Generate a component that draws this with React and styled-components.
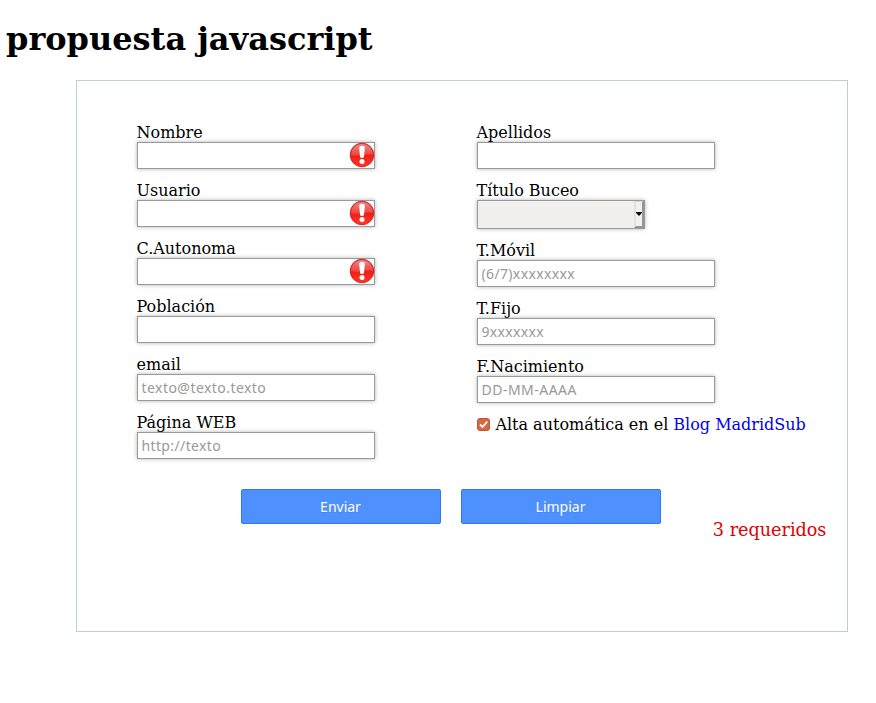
import React from "react";
import styled, { createGlobalStyle } from "styled-components";

const GlobalStyle = createGlobalStyle`
  * { box-sizing: border-box; }
  body {
    margin: 0;
    background: #fff;
    color: #000;
    font: 16px/19px "DejaVu Serif", serif;
  }
`;

const Page = styled.main`
  padding: 20px 28px 0 6px;
`;

const Title = styled.h1`
  margin: 0 0 22px;
  font-size: 32px;
  line-height: 38px;
  font-weight: bold;
  white-space: nowrap;
`;

const Panel = styled.form`
  width: 772px;
  height: 552px;
  margin-left: 70px;
  padding: 42px 20px 0 60px;
  border: 1px solid #bccfdc;
`;

const Columns = styled.div`
  display: grid;
  grid-template-columns: 238px 330px;
  column-gap: 102px;
`;

const Column = styled.div`
  display: flex;
  flex-direction: column;
  gap: 12px;
`;

const Field = styled.label`
  display: flex;
  flex-direction: column;
  align-items: flex-start;
`;

const Label = styled.span`
  height: 19px;
  margin-left: -0.5px;
  white-space: nowrap;
`;

const InputFrame = styled.span`
  display: flex;
  align-items: center;
  width: 238px;
  height: 27px;
  border: 1px solid #999;
  background: #fff;
  box-shadow: 0 0 4px rgba(0, 0, 0, 0.3);
`;

const Input = styled.input`
  flex: 1;
  min-width: 0;
  height: 25px;
  margin: 0;
  padding: 0 3.5px;
  border: 0;
  outline: 0;
  background: transparent;
  font: 14px "Noto Sans", sans-serif;
  letter-spacing: ${(p) => p.$tracking || 0}px;

  &::placeholder {
    color: #999;
    opacity: 1;
  }
`;

const AlertSvg = styled.svg`
  flex: none;
  width: 26px;
  height: 26px;
  margin: 0 -1px 2px 0;
`;

const SelectBox = styled.span`
  display: flex;
  justify-content: flex-end;
  width: 168px;
  height: 29px;
  border: 1px solid #999;
  background: #f1f0ee;
  box-shadow: 0 0 4px rgba(0, 0, 0, 0.3);
`;

const SelectArrow = styled.span`
  display: flex;
  align-items: center;
  justify-content: center;
  width: 10px;
  height: 27px;
  border: solid;
  border-width: 1px 2px 2px 2px;
  border-color: #d8d6d2 #959595 #959595 #e2e1de;
  background: #f1f0ee;
`;

const CheckRow = styled.div`
  display: flex;
  align-items: center;
  height: 19px;
  white-space: nowrap;
`;

const CheckSvg = styled.svg`
  width: 13px;
  height: 13px;
  margin: 0 5px 1px 0.4px;
`;

const BlogLink = styled.a`
  margin-left: 5px;
  color: #00e;
  text-decoration: none;
`;

const Actions = styled.div`
  display: flex;
  gap: 20px;
  margin: 30px 0 0 104px;
`;

const Button = styled.button`
  width: 200px;
  height: 35px;
  padding: 0 1px 0 0;
  border: 1px solid #3079ed;
  border-radius: 2px;
  background: #4d90fe;
  color: #fff;
  font: 14px "Noto Sans", sans-serif;
  text-shadow: 0 1px rgba(0, 0, 0, 0.1);
`;

const Required = styled.p`
  margin: -4px 0.6px 0 0;
  color: #e00000;
  font-size: 17.6px;
  line-height: 21px;
  text-align: right;
`;

const AlertIcon = () => (
  <AlertSvg viewBox="0 0 26 26" aria-hidden="true">
    <defs>
      <linearGradient id="alertFill" x1="0" y1="0" x2="0" y2="1">
        <stop offset="0" stopColor="#d93530" />
        <stop offset="0.5" stopColor="#ee1c16" />
        <stop offset="1" stopColor="#ff3a28" />
      </linearGradient>
      <linearGradient id="alertGloss" x1="0" y1="0" x2="0" y2="1">
        <stop offset="0" stopColor="#fff" stopOpacity="0.42" />
        <stop offset="1" stopColor="#fff" stopOpacity="0.15" />
      </linearGradient>
    </defs>
    <circle cx="13" cy="13" r="11.8" fill="url(#alertFill)" stroke="#c91c1c" strokeWidth="0.9" />
    <path d="M2 13a11 11 0 0 1 22 0C18 11 8 15.5 2 13Z" fill="url(#alertGloss)" />
    <path d="M10.2 6q0-2.2 2.8-2.2T15.8 6L15 14.5q-.2 1.5-2 1.5t-2-1.5Z" fill="#fff" />
    <circle cx="13" cy="19.5" r="2.5" fill="#fff" />
  </AlertSvg>
);

const TextField = ({ label, placeholder, required, tracking }) => (
  <Field>
    <Label>{label}</Label>
    <InputFrame>
      <Input type="text" placeholder={placeholder} $tracking={tracking} />
      {required && <AlertIcon />}
    </InputFrame>
  </Field>
);

export default function App() {
  return (
    <>
      <GlobalStyle />
      <Page>
        <Title>propuesta javascript</Title>
        <Panel>
          <Columns>
            <Column>
              <TextField label="Nombre" required />
              <TextField label="Usuario" required />
              <TextField label="C.Autonoma" required />
              <TextField label="Población" />
              <TextField label="email" placeholder="texto@texto.texto" tracking={0.45} />
              <TextField label="Página WEB" placeholder="http://texto" tracking={0.37} />
            </Column>
            <Column>
              <TextField label="Apellidos" />
              <Field as="div">
                <Label>Título Buceo</Label>
                <SelectBox role="combobox" aria-label="Título Buceo" aria-expanded="false">
                  <SelectArrow>
                    <svg width="6" height="4" viewBox="0 0 6 4">
                      <path d="M0 0h6v.8L3 4 0 .8Z" />
                    </svg>
                  </SelectArrow>
                </SelectBox>
              </Field>
              <TextField label="T.Móvil" placeholder="(6/7)xxxxxxxx" tracking={0.35} />
              <TextField label="T.Fijo" placeholder="9xxxxxxx" tracking={0.32} />
              <TextField label="F.Nacimiento" placeholder="DD-MM-AAAA" tracking={0.48} />
              <CheckRow>
                <CheckSvg viewBox="0 0 13 13" role="checkbox" aria-checked="true">
                  <rect x=".5" y=".5" width="12" height="12" rx="2.5" fill="#d9683f" stroke="#b5573a" />
                  <path d="M3 6.5 5.5 9 10.3 3.5" fill="none" stroke="#fff" strokeWidth="1.8" />
                </CheckSvg>
                <span>Alta automática en el</span>
                <BlogLink href="#">Blog MadridSub</BlogLink>
              </CheckRow>
            </Column>
          </Columns>
          <Actions>
            <Button type="button">Enviar</Button>
            <Button type="button">Limpiar</Button>
          </Actions>
          <Required>3 requeridos</Required>
        </Panel>
      </Page>
    </>
  );
}
